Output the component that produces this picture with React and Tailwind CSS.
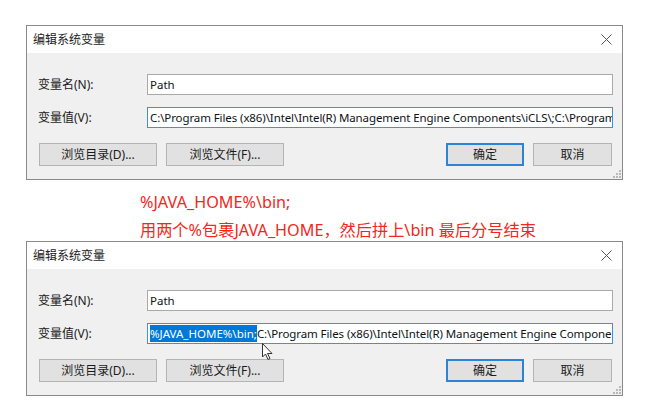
import React from 'react';

const FONT = { fontFamily: '"Noto Sans", "Noto Sans CJK SC", sans-serif' };

const PATH_TAIL = 'C:\\Program Files (x86)\\Intel\\Intel(R) Management Engine Components\\iCLS\\;C:\\Program Files\\Intel';

// Windows-style push button
const Button = ({ label, width, primary = false }) => (
  <div
    className={`h-[23px] flex items-center justify-center bg-[#e1e1e1] text-[12px] text-[#1a1a1a] ${
      primary ? 'border-2 border-[#2b84d8]' : 'border border-[#b4b4b4]'
    } ${width}`}
  >
    {label}
  </div>
);

const Field = ({ label, focused = false, children }) => (
  <div className="flex items-center">
    <div className="w-[120px] pl-[11px] text-[12px] text-[#1a1a1a]">{label}</div>
    <div
      className={`w-[466px] h-[21px] flex items-center px-[2px] bg-white overflow-hidden whitespace-nowrap text-[11.5px] text-[#111] border ${
        focused ? 'border-[#3c93de]' : 'border-[#a9a9a9]'
      }`}
    >
      {children}
    </div>
  </div>
);

const Dialog = ({ value }) => (
  <div className="relative w-[597px] border border-[#8a8a8a] bg-[#f0f0f0]">
    <div className="h-[27px] bg-white flex items-center justify-between pl-[6px] pr-[10px]">
      <span className="text-[12px] text-[#222]">编辑系统变量</span>
      <svg width="11" height="11" viewBox="0 0 11 11">
        <path d="M0.5 0.5 L10.5 10.5 M10.5 0.5 L0.5 10.5" stroke="#555" strokeWidth="1" />
      </svg>
    </div>
    <div className="pt-[21px] pb-[13px] flex flex-col">
      <Field label="变量名(N):">Path</Field>
      <div className="h-[12px]" />
      <Field label="变量值(V):" focused>
        {value}
      </Field>
      <div className="mt-[15px] flex items-center pl-[12px] pr-[10px]">
        <div className="flex gap-[9px]">
          <Button label="浏览目录(D)..." width="w-[118px]" />
          <Button label="浏览文件(F)..." width="w-[118px]" />
        </div>
        <div className="ml-auto flex gap-[9px]">
          <Button label="确定" width="w-[78px]" primary />
          <Button label="取消" width="w-[79px]" />
        </div>
      </div>
    </div>
    {/* resize grip */}
    <svg className="absolute right-[1px] bottom-[1px]" width="8" height="8" viewBox="0 0 8 8">
      <rect x="6" y="0" width="2" height="2" fill="#b8b8b8" />
      <rect x="6" y="3" width="2" height="2" fill="#b8b8b8" />
      <rect x="3" y="3" width="2" height="2" fill="#b8b8b8" />
      <rect x="6" y="6" width="2" height="2" fill="#b8b8b8" />
      <rect x="3" y="6" width="2" height="2" fill="#b8b8b8" />
      <rect x="0" y="6" width="2" height="2" fill="#b8b8b8" />
    </svg>
  </div>
);

export default function App() {
  return (
    <div className="relative w-[649px] h-[408px] bg-white overflow-hidden" style={FONT}>
      <div className="pl-[26px] pt-[25px]">
        <Dialog value={<span className="tracking-[-0.1px]">{PATH_TAIL}</span>} />
        <div className="h-[61px] pt-[8px] pl-[114px] text-[16.2px] leading-[28px] text-[#f2271c]">
          <div>%JAVA_HOME%\bin;</div>
          <div>用两个%包裹JAVA_HOME，然后拼上\bin 最后分号结束</div>
        </div>
        <Dialog
          value={
            <>
              <span className="bg-[#0078d7] text-white">%JAVA_HOME%\bin;</span>
              <span className="tracking-[-0.1px]">{PATH_TAIL}</span>
            </>
          }
        />
      </div>
      {/* mouse pointer */}
      <svg className="absolute left-[262px] top-[343px]" width="12" height="18" viewBox="0 0 12 18">
        <path d="M0.5 0.5 L0.5 14 L3.5 11 L6 16.5 L8 15.5 L5.5 10.5 L10 10.5 Z" fill="white" stroke="#333" strokeWidth="1" />
      </svg>
    </div>
  );
}
